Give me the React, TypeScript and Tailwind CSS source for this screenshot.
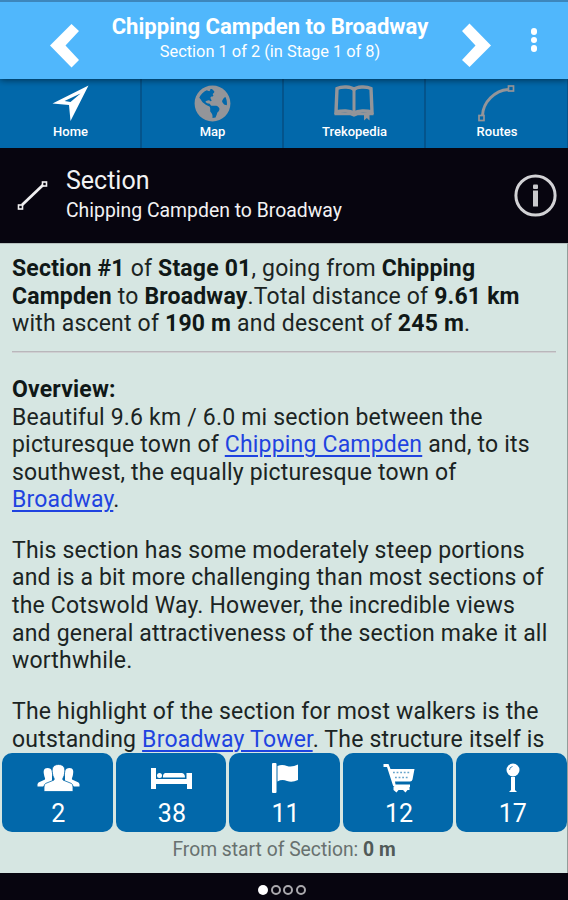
import type { ReactNode } from 'react'
import { FaGlobeAmericas } from 'react-icons/fa'

const tabs = [
  { label: 'Home', icon: <HomeArrow /> },
  { label: 'Map', icon: <FaGlobeAmericas className="size-[37px] text-[#949599]" /> },
  { label: 'Trekopedia', icon: <BookIcon /> },
  { label: 'Routes', icon: <RouteIcon /> },
]

const counters = [
  { count: 2, icon: <PeopleIcon /> },
  { count: 38, icon: <BedIcon /> },
  { count: 11, icon: <FlagIcon /> },
  { count: 12, icon: <CartIcon /> },
  { count: 17, icon: <PinIcon /> },
]

export default function App() {
  return (
    <div className="flex h-[900px] w-[568px] flex-col overflow-hidden bg-[#07050f] font-['Roboto',sans-serif]">
      {/* Header */}
      <header className="relative z-10 flex h-[79px] shrink-0 border-t-2 border-[#3d86bc] bg-[#50b7fc] text-white shadow-[0_1px_7px_rgba(0,0,0,0.55)]">
        <div className="flex w-[108px] justify-end pt-[21px] pr-[28px]">
          <Chevron />
        </div>
        <div className="w-[324px] pt-[10px] text-center whitespace-nowrap">
          <h1 className="text-[22.1px] leading-7 font-bold">Chipping Campden to Broadway</h1>
          <p className="text-[16.4px] leading-6">Section 1 of 2 (in Stage 1 of 8)</p>
        </div>
        <div className="flex w-[74px] pt-[21px] pl-[29px]">
          <Chevron flipped />
        </div>
        <div className="flex flex-1 flex-col items-center gap-[2px] pt-[26px] pr-[6px]">
          <span className="size-[6.5px] rounded-full bg-white" />
          <span className="size-[6.5px] rounded-full bg-white" />
          <span className="size-[6.5px] rounded-full bg-white" />
        </div>
      </header>

      {/* Tabs */}
      <nav className="grid h-[69px] shrink-0 grid-cols-4 bg-[#0268aa] text-white">
        {tabs.map((tab) => (
          <button
            key={tab.label}
            className="flex flex-col items-center border-r-2 border-[#04548c] pt-[6px] last:border-r"
          >
            <span className="flex h-[37px] items-center">{tab.icon}</span>
            <span className="pl-px text-[13px] leading-[19px] font-medium">{tab.label}</span>
          </button>
        ))}
      </nav>

      {/* Section title */}
      <div className="flex h-[95px] shrink-0 items-center pr-[11px] pl-[17px] text-[#f2f2f3]">
        <SectionLine />
        <div className="ml-[18px] flex-1 pb-[2px] whitespace-nowrap">
          <h2 className="pb-px text-[25px] leading-[30px]">Section</h2>
          <p className="text-[19.4px] leading-[27px]">Chipping Campden to Broadway</p>
        </div>
        <InfoIcon />
      </div>

      {/* Content */}
      <main className="flex h-[630px] shrink-0 flex-col border-t border-r border-t-[#b5c0be] border-r-[#929d9a] bg-[#d6e6e2]">
        <article className="h-[509px] shrink-0 overflow-hidden pt-[11px] pr-[11px] pl-[12px] text-[23px] leading-[27.55px] tracking-[0.19px] whitespace-nowrap text-[#1b2423]">
          <p>
            <B>Section #1</B> of <B>Stage 01</B>, going from <B>Chipping</B>
            <br />
            <B>Campden</B> to <B>Broadway</B>.Total distance of <B>9.61 km</B>
            <br />
            with ascent of <B>190 m</B> and descent of <B>245 m</B>.
          </p>
          <hr className="mt-[13.5px] mb-[23px] h-[2px] border-t border-b border-t-[#b9b7bb] border-b-[#cfd0d2]" />
          <p>
            <B>Overview:</B>
            <br />
            Beautiful 9.6 km / 6.0 mi section between the
            <br />
            picturesque town of <Link>Chipping Campden</Link> and, to its
            <br />
            southwest, the equally picturesque town of
            <br />
            <Link>Broadway</Link>.
          </p>
          <p className="mt-[23px]">
            This section has some moderately steep portions
            <br />
            and is a bit more challenging than most sections of
            <br />
            the Cotswold Way. However, the incredible views
            <br />
            and general attractiveness of the section make it all
            <br />
            worthwhile.
          </p>
          <p className="mt-[23.5px]">
            The highlight of the section for most walkers is the
            <br />
            outstanding <Link>Broadway Tower</Link>. The structure itself is
          </p>
        </article>

        <div className="grid shrink-0 grid-cols-5 gap-[3px] pl-[2px]">
          {counters.map((item) => (
            <button
              key={item.count}
              className="flex h-[79px] flex-col items-center rounded-[10px] bg-[#0268aa] pt-[9px] pl-[2px] text-white"
            >
              <span className="flex h-[34px] items-center">{item.icon}</span>
              <span className="pt-[2px] text-[25px] leading-9">{item.count}</span>
            </button>
          ))}
        </div>
        <p className="pt-[6px] pl-px text-center text-[19.3px] leading-6 text-[#68716f]">
          From start of Section: <b className="font-bold text-[#515a58]">0 m</b>
        </p>
      </main>

      {/* Page dots */}
      <div className="flex flex-1 items-center justify-center gap-[2.5px] pt-[7px] pr-1">
        <span className="size-[10px] rounded-full bg-white" />
        <span className="size-[10px] rounded-full border-2 border-[#aaa9ad]" />
        <span className="size-[10px] rounded-full border-2 border-[#aaa9ad]" />
        <span className="size-[10px] rounded-full border-2 border-[#aaa9ad]" />
      </div>
    </div>
  )
}

function B({ children }: { children: ReactNode }) {
  return <b className="font-bold text-[#101817]">{children}</b>
}

function Link({ children }: { children: ReactNode }) {
  return (
    <a href="#" className="text-[#1f43e0] underline decoration-[1.5px] underline-offset-[3px]">
      {children}
    </a>
  )
}

function Chevron({ flipped = false }: { flipped?: boolean }) {
  return (
    <svg
      width="30"
      height="45"
      viewBox="0 0 30 45"
      fill="currentColor"
      className={flipped ? 'rotate-180' : ''}
    >
      <path d="M21.500 1 L29 8 L15.500 22.5 L29 37 L21.500 44.500 L0 22.5Z" />
    </svg>
  )
}

function HomeArrow() {
  return (
    <svg width="37" height="37" viewBox="0 0 37 37" fill="white" fillRule="evenodd">
      <path d="M36.5 0.5 L18.5 36 L17 20 L0.5 18.5Z M28.5 8.5 L12.5 16 L18.5 17Z" />
    </svg>
  )
}

function BookIcon() {
  return (
    <svg width="42" height="37" viewBox="0 0 42 37" fill="none" stroke="#949599">
      <path
        d="M21 4.500 C18 1.500 9 1.200 4 3.500 L3 27 C9 25.500 17 25.500 21 28 C25 25.500 33 25.500 39 27 L38 3.500 C33 1.200 24 1.500 21 4.500Z"
        strokeWidth="3.400"
      />
      <path d="M21 4 V28" strokeWidth="3" />
      <path d="M1.500 29 H17 L21 30.500 L25 29 H40.500" strokeWidth="2.400" />
      <path d="M31 29 H36.500 V35.500 L33.800 33 L31 35.500Z" fill="#949599" stroke="none" />
    </svg>
  )
}

function RouteIcon() {
  return (
    <svg width="37" height="37" viewBox="0 0 37 37" fill="none" stroke="#949599">
      <path d="M4.5 30.5 C5 17 17 5.5 30 4.5" strokeWidth="3" />
      <rect x="30.5" y="1" width="5" height="5" strokeWidth="1.7" />
      <rect x="1" y="30.5" width="5" height="5" strokeWidth="1.7" />
    </svg>
  )
}

function SectionLine() {
  return (
    <svg width="31" height="31" viewBox="0 0 31 31" fill="none" stroke="#f0f0f1">
      <path d="M5 25 L26 5" strokeWidth="2.8" />
      <rect x="25.5" y="2" width="4" height="4" strokeWidth="1.6" />
      <rect x="1.5" y="25" width="4" height="4" strokeWidth="1.6" />
    </svg>
  )
}

function InfoIcon() {
  return (
    <svg width="43" height="43" viewBox="0 0 43 43" fill="#c9c9cc">
      <circle cx="21.5" cy="21.5" r="19.600" fill="none" stroke="#d2d2d5" strokeWidth="3" />
      <rect x="19" y="10.5" width="5" height="4.5" rx="1" />
      <rect x="19" y="16.5" width="5" height="16" />
    </svg>
  )
}

function PeopleIcon() {
  return (
    <svg width="43" height="28" viewBox="0 0 43 28" fill="white">
      <path d="M10.500 4 C6.500 4 6.300 7 7 10.500 C7.300 13 8.500 14 8 15.500 L1.500 18.500 Q0 19.500 0.500 22.500 H6 L15 17 V7 Q14 4 10.500 4Z" />
      <path d="M32.500 4 C36.500 4 36.700 7 36 10.500 C35.700 13 34.500 14 35 15.500 L41.500 18.500 Q43 19.500 42.500 22.500 H37 L28 17 V7 Q29 4 32.500 4Z" />
      <path
        d="M21.500 0.500 C15.500 0.500 14.500 5 15.500 9.500 C15.500 13 18 14 17 16 L8.500 19.500 Q7 20.500 7 23 V27.500 H36 V23 Q36 20.500 34.500 19.500 L26 16 C25 14 27.500 13 27.500 9.500 C28.500 5 27.500 0.500 21.500 0.500Z"
        stroke="#0268aa"
        strokeWidth="0.8"
      />
    </svg>
  )
}

function BedIcon() {
  return (
    <svg width="41" height="21" viewBox="0 0 41 21" fill="white">
      <path d="M0 0 H5 V11 H35.500 V5 H41 V21 H36 V16 H5 V21 H0Z" />
      <circle cx="8.500" cy="7.500" r="2.500" />
      <path d="M14 5 H31 Q34 5.500 34 9.500 H12 Q11.500 6 14 5Z" />
    </svg>
  )
}

function FlagIcon() {
  return (
    <svg width="28" height="30" viewBox="0 0 28 30" fill="white">
      <rect x="1" y="0" width="4.500" height="30" rx="1" />
      <path d="M6.500 3 Q11 1 16 3 Q21 4.500 27 1.500 V17 Q21 20 16 18 Q11 16 6.500 18.500Z" />
    </svg>
  )
}

function CartIcon() {
  return (
    <svg width="32" height="30" viewBox="0 0 32 30" fill="white">
      <path d="M0.500 1 H5.500 L7.500 6 H31.500 L29.500 16.500 Q29 18.500 27 18.500 H12 L12.500 21.500 H27 V24 H11.500 Q10 24 9.500 21 L4 4 H0.500Z" />
      <path d="M10.500 24 H26.500 V27 H24.500 L22.500 29.500 L20 27 H15.500 L13.500 29.500 L10.500 27Z" />
      <path
        d="M10 9.500 H28 M12 14.500 H26"
        stroke="#0268aa"
        strokeWidth="1.600"
        strokeDasharray="1.800 1.800"
        opacity="0.6"
      />
    </svg>
  )
}

function PinIcon() {
  return (
    <svg width="16" height="30" viewBox="0 0 16 30" fill="white">
      <circle cx="8" cy="7" r="6.500" />
      <path d="M6 14 H10 V27 L12 29 H4 L6 27Z" />
      <path d="M4.500 7 Q4.500 4 7.500 3.500" fill="none" stroke="#0268aa" strokeWidth="1" opacity="0.8" />
    </svg>
  )
}
